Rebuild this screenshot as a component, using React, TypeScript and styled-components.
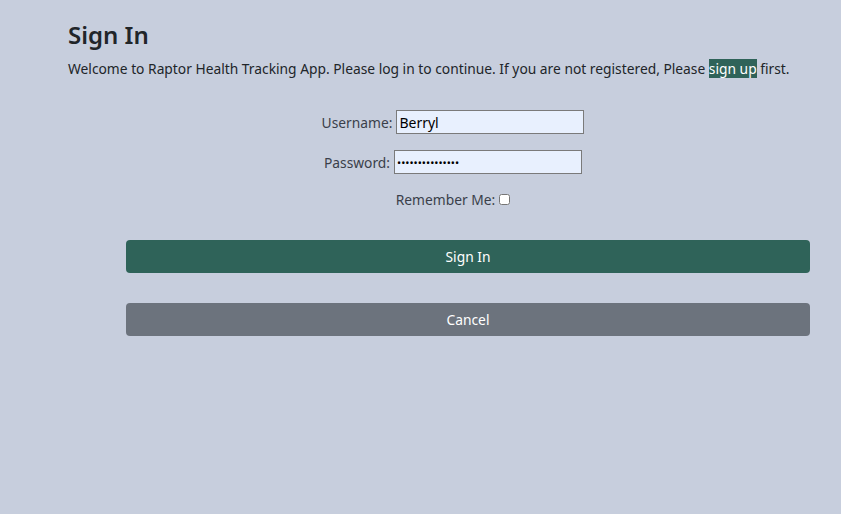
import styled, { createGlobalStyle } from 'styled-components'

const GlobalStyle = createGlobalStyle`
  html, body {
    margin: 0;
    padding: 0;
    background: #c7cedd;
  }
  body {
    font-family: 'Noto Sans', 'Open Sans', sans-serif;
    color: #212529;
  }
`

export default function App() {
  return (
    <>
      <GlobalStyle />
      <Page>
        <Title>Sign In</Title>
        <Intro>
          Welcome to Raptor Health Tracking App. Please log in to continue. If you are not registered, Please{' '}
          <SignUp href="#">sign up</SignUp> first.
        </Intro>
        <Form onSubmit={(e) => e.preventDefault()}>
          <Field>
            <Label htmlFor="username">Username:</Label>
            <TextInput id="username" type="text" defaultValue="Berryl" />
          </Field>
          <Field>
            <Label htmlFor="password">Password:</Label>
            <TextInput id="password" type="password" defaultValue="berrylpassword1" $secret />
          </Field>
          <Field $tight>
            <Label htmlFor="remember">Remember Me:</Label>
            <Check id="remember" type="checkbox" />
          </Field>
          <Actions>
            <Button type="submit" $variant="primary">Sign In</Button>
            <Button type="button" $variant="secondary">Cancel</Button>
          </Actions>
        </Form>
      </Page>
    </>
  )
}

const Page = styled.main`
  padding: 17px 3px 0 68px;
  min-height: 514px;
  box-sizing: border-box;
`

const Title = styled.h1`
  margin: 0;
  font-size: 24px;
  font-weight: 600;
  line-height: 36px;
`

const Intro = styled.p`
  margin: 6px 0 0;
  font-size: 13.8px;
  line-height: 20px;
`

const SignUp = styled.a`
  background: #2f6359;
  color: #fff;
  text-decoration: none;
`

const Form = styled.form`
  margin-top: 31px;
  display: flex;
  flex-direction: column;
  align-items: center;
`

const Field = styled.div<{ $tight?: boolean }>`
  display: flex;
  align-items: center;
  gap: 4px;
  height: ${({ $tight }) => ($tight ? '18px' : '24px')};
  margin-bottom: ${({ $tight }) => ($tight ? '32px' : '16px')};
`

const Label = styled.label`
  font-size: 13.8px;
  color: #3a3f4a;
`

const TextInput = styled.input<{ $secret?: boolean }>`
  width: 188px;
  height: 24px;
  box-sizing: border-box;
  padding: 1px 2px;
  border: 1px solid #7a7a7a;
  background: #e8f0fe;
  font-family: 'Noto Sans', sans-serif;
  font-size: ${({ $secret }) => ($secret ? '11px' : '14px')};
  color: #000;
`

const Check = styled.input`
  margin: 0;
  width: 11px;
  height: 11px;
`

const Actions = styled.div`
  align-self: stretch;
  margin: 0 28px 0 58px;
  display: flex;
  flex-direction: column;
  gap: 30px;
`

const Button = styled.button<{ $variant: 'primary' | 'secondary' }>`
  height: 33px;
  border: none;
  border-radius: 4px;
  background: ${({ $variant }) => ($variant === 'primary' ? '#2f6359' : '#6c737d')};
  color: #fff;
  font-family: 'Noto Sans', sans-serif;
  font-size: 13.8px;
  cursor: pointer;
`
